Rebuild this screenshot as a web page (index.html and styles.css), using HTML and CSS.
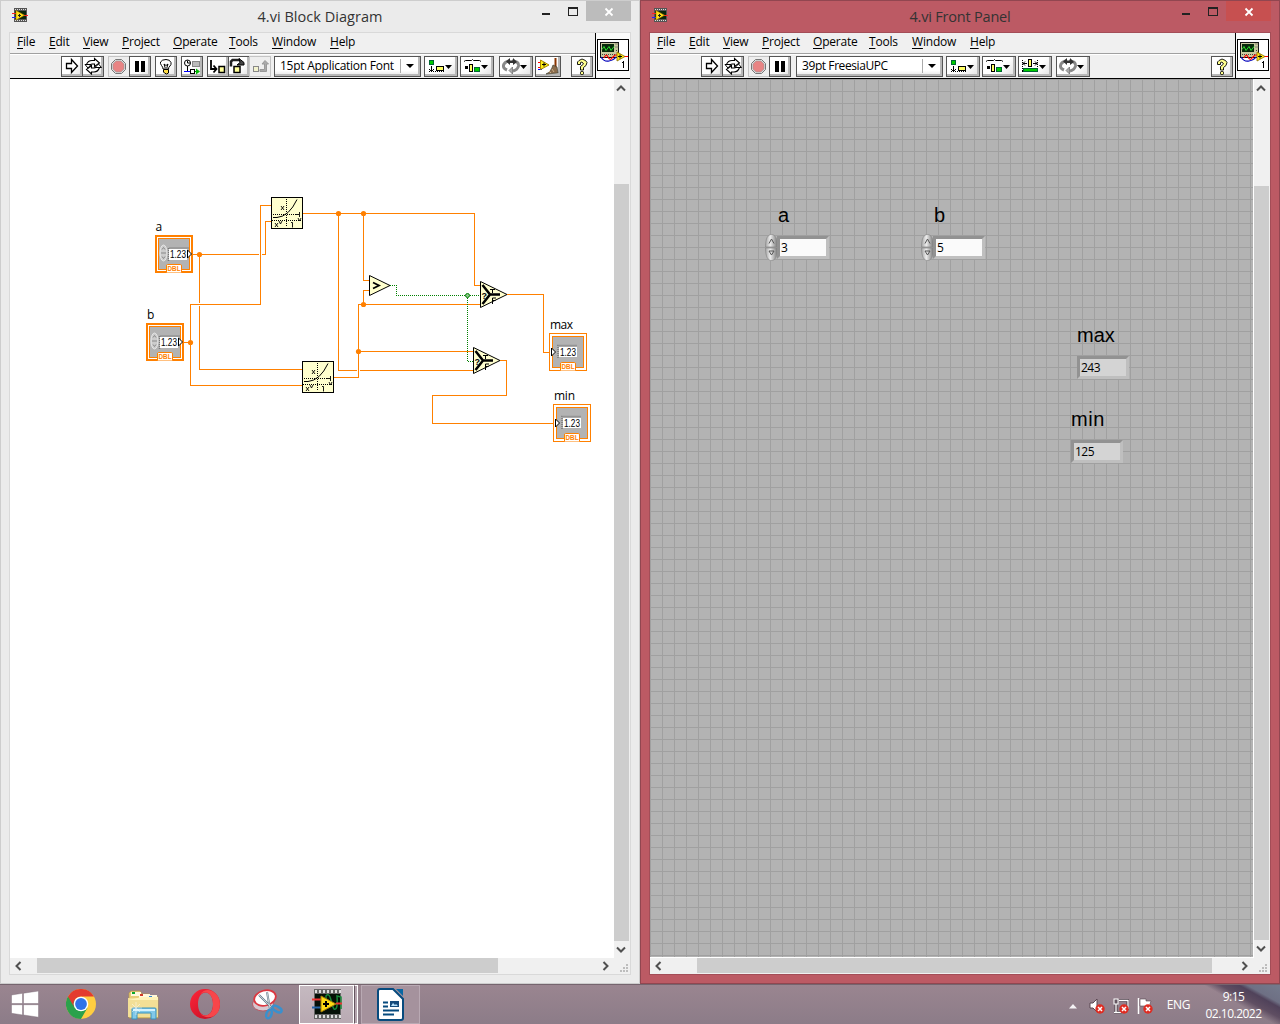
FILE: index.html
```
<!DOCTYPE html>
<html lang="en">
<head>
<meta charset="utf-8">
<title>4.vi</title>
<link rel="stylesheet" href="styles.css">
</head>
<body>
<svg class="library" width="0" height="0" aria-hidden="true">
  <defs>
    <symbol id="app" viewBox="12 7 16 16">
      <rect x="14" y="8" width="13" height="14" fill="#555"/>
      <path d="M15 9.500h12M15 20.500h12" stroke="#ddd" stroke-dasharray="1 1"/>
      <rect x="15" y="11" width="11" height="8" fill="#0a260c"/>
      <path d="M12 13.500h4M24 15.500h4" stroke="#f22" />
      <path d="M12 17.500h4" stroke="#22f"/>
      <path d="M16 10.500v9.500l8.500-4.750z" fill="#ffe11a" stroke="#a77c00" stroke-width=".6"/>
      <path d="M18 15.500h3M19.500 14v3" stroke="#222"/>
    </symbol>
    <symbol id="run" viewBox="0 0 22 21"><path d="M5.500 7.500h5v-4l6 6.500-6 6.500v-4h-5z" fill="#fff" stroke="#000" stroke-width="1.300"/></symbol>
    <symbol id="again" viewBox="0 0 22 21">
      <path d="M4.500 8.500q1.500-4 5.500-4h2.500v-2l5 4.500-5 3.500v-2.500H10q-1.500 0-2 1.500" fill="#fff" stroke="#000" stroke-width="1.100"/>
      <path d="M17.500 11.500q-1.500 4.500-5.500 4.500H9.500v2l-5-4.500 5-4v2.500H12q1.500 0 2-1.500" fill="#fff" stroke="#000" stroke-width="1.100"/>
      <path d="M3 8.500h6l-3 3.500zM13 11.500l3.500-3.500 3 3.500z" fill="#fff" stroke="#000"/>
    </symbol>
    <symbol id="stop" viewBox="0 0 22 21"><path d="M7.500 3.500h6l4 4v6l-4 4h-6l-4-4v-6z" fill="#ddd" stroke="#777"/><path d="M8 5h5l3 3v5l-3 3H8l-3-3V8z" fill="#e88484" stroke="#999" stroke-width=".6"/></symbol>
    <symbol id="pause" viewBox="0 0 22 21"><path d="M6 5h4v11H6zM12 5h4v11h-4z"/></symbol>
    <symbol id="bulb" viewBox="0 0 22 21"><path d="M8 13q0-2-1.500-3.500-1.500-2-1-3.500Q7 3.500 11 3.500t5 3q.5 2-1 3.500Q13.500 11 13.500 13z" fill="#fff" stroke="#000"/><path d="M9 8l1.200 4M13 8l-1.200 4M9 8l2 1.500L13 8" stroke="#000" fill="none"/><path d="M8.500 13.500h5v3.500l-2 1-2-1-1-1z" fill="#ffdc45" stroke="#000"/></symbol>
    <symbol id="retain" viewBox="0 0 22 21"><circle cx="6.500" cy="7" r="3" fill="#fff" stroke="#000"/><path d="M6.500 4.500V7H9M6.500 10v5" stroke="#000" fill="none"/><rect x="11.500" y="5.500" width="7" height="5" fill="#bbb" stroke="#888"/><path d="M3 15.500h7" stroke="#00f"/><path d="M14 15.500h2" stroke="#090"/><rect x="9.500" y="13.500" width="4" height="4" fill="#fff" stroke="#000"/><path d="M15 12.500v6l4-3z" fill="#0b0"/></symbol>
    <symbol id="into" viewBox="0 0 22 21"><path d="M4 4v9h5M6.500 9.500l3 3.500-3 3.500" fill="none" stroke="#000" stroke-width="1.800"/><rect x="12" y="10.500" width="5.500" height="6" fill="#ffff9b" stroke="#000" stroke-width="1.500"/></symbol>
    <symbol id="over" viewBox="0 0 22 21"><path d="M3 10.500V5.500l1.500-1.500H12" fill="none" stroke="#222" stroke-width="2.500"/><path d="M11 2.500l5 4V9H9l3-2.500z" fill="#444" stroke="#000"/><rect x="6" y="10.500" width="6" height="6" fill="#ffff9b" stroke="#000" stroke-width="1.500"/></symbol>
    <symbol id="out" viewBox="0 0 22 21"><path d="M11 13.500h4.500V8h-2.500L16 4.500 19.500 8H17.500v7.500H11z" fill="#aaa" stroke="#999"/><rect x="4.500" y="10.500" width="5" height="5" fill="#f3f3cf" stroke="#888"/></symbol>
    <symbol id="align" viewBox="0 0 34 21"><rect x="5.500" y="4.500" width="4" height="4" fill="#0c0" stroke="#063"/><path d="M7.500 10v5M5 13l2.500 2.500L10 13" stroke="#000" fill="none"/><path d="M5 15.500h16" stroke="#000" stroke-dasharray="1 1"/><rect x="12.500" y="10.500" width="7" height="4" fill="#ffff63" stroke="#000"/><path d="M21 9h7l-3.500 4z"/></symbol>
    <symbol id="spread" viewBox="0 0 34 21"><path d="M4 5.500l1.500-1h6l1-1 1 1h6l1.500 1" stroke="#000" fill="none"/><rect x="5" y="10" width="3" height="3"/><rect x="9.500" y="8.500" width="3" height="7" fill="#ffff63" stroke="#000"/><rect x="14.500" y="11.500" width="5" height="4" fill="#0c0" stroke="#063"/><path d="M21 9h7l-3.500 4z"/></symbol>
    <symbol id="resize" viewBox="0 0 34 21"><path d="M4.500 4v12M19.500 4v12M4 15.500h16" stroke="#000" stroke-dasharray="1 1"/><path d="M5 7.500h4M15 7.500h4M7 5.500l-2 2 2 2M17 5.500l2 2-2 2" stroke="#000" fill="none"/><rect x="10.500" y="3.500" width="3" height="7" fill="#ffff63" stroke="#000"/><rect x="5.500" y="12.500" width="14" height="3" fill="#0c0" stroke="#063"/><path d="M21 9h7l-3.500 4z"/></symbol>
    <symbol id="order" viewBox="0 0 34 21"><path d="M8 14Q3 12 5 8q2-3 6-3M13 5q7 0 6.500 5-1 4-5.500 5" fill="none" stroke="#888" stroke-width="3"/><path d="M10 14.500l3.500-3.500v7z" fill="#aaa" stroke="#666" stroke-width=".7"/><path d="M7 5.500l4-3.500v2.500h3V2l4 4-4 3V7h-3v2z" fill="#333"/><path d="M21 9h7l-3.500 4z"/></symbol>
    <symbol id="clean" viewBox="0 0 26 21"><path d="M3 6.500h4M3 11.500h4" stroke="#f00"/><path d="M3 13.500h4" stroke="#00f"/><path d="M5.500 4v9.500L14 9z" fill="#ffef16" stroke="#a88600"/><path d="M7 8.500h4M9 6.500v4" stroke="#000"/><path d="M20.500 2v9" stroke="#8a3500" stroke-width="2"/><path d="M18 9l4 2 1 6-12 1q5-2 7-9z" fill="#8c6d4d" stroke="#443" stroke-width=".7"/><path d="M14 15l2 2M17 13l2 3" stroke="#ccb28b"/></symbol>
    <symbol id="help" viewBox="0 0 22 21"><path d="M6.500 8.500V6L8 4.500 11 3l3.500 1.500L16 6.500 15 9.500 12.500 11.500V14h-3v-3.500l3-2.500-1.500-2L9.500 6.500v2z" fill="#ffff8c" stroke="#000" stroke-width=".9"/><rect x="9.500" y="15.500" width="3" height="3" rx="1" fill="#ffff8c" stroke="#000"/></symbol>
    <symbol id="vi" viewBox="597 39 32 32">
      <rect x="597.500" y="39.500" width="31" height="31" fill="#fff" stroke="#000"/>
      <rect x="600.500" y="42.500" width="18" height="15" fill="#c9c99f" stroke="#111"/>
      <rect x="602" y="44" width="12" height="8" fill="#082a0b"/>
      <path d="M602 49.500l2-3 2 4 3-4 2 4 3-4" fill="none" stroke="#2cde2c"/>
      <path d="M615.500 44h3M615.500 47h3M616.500 50v2M602 54.500h14" stroke="#444" stroke-dasharray="1 1"/>
      <path d="M601 57q3 5 8 4t7-4" fill="none" stroke="#00b" stroke-width="1.200"/>
      <path d="M604 58q2-5 4-1t4 1l3-3h4M624 56.500h4" fill="none" stroke="#f00" stroke-width="1.200"/>
      <path d="M617 52v9l8-4.500z" fill="#ffec18" stroke="#897000" stroke-width=".8"/>
      <path d="M618 56.500h4M620 54.500v4" stroke="#000"/>
      <path d="M622 62.500h2M623.500 61v7" stroke="#000"/>
    </symbol>
    <symbol id="up" viewBox="0 0 10 8"><path d="M1 6.500l4-4 4 4" fill="none" stroke="#505050" stroke-width="2"/></symbol>
    <symbol id="grip" viewBox="0 0 9 9"><path d="M6 0h2v2H6zM3 3h2v2H3zM6 3h2v2H6zM0 6h2v2H0zM3 6h2v2H3zM6 6h2v2H6z" fill="#bdbdbd"/></symbol>
    <symbol id="err" viewBox="0 0 10 10"><circle cx="5" cy="5" r="4.700" fill="#df2c22"/><path d="M3 3l4 4M7 3L3 7" stroke="#fff" stroke-width="1.500"/></symbol>

    <g id="power">
      <rect x=".5" y=".5" width="31" height="31" fill="#ffffce" stroke="#000"/>
      <path d="M15.500 2v28M2 17.500h24M1 23.500h30" stroke="#000" stroke-dasharray="1 1"/>
      <path d="M2 20.500h4q12-1 20-18" fill="none" stroke="#000"/>
      <path d="M10 9l3 4M13 9l-3 4M4 26l3 4M7 26l-3 4M8 24l1.500 3L11 24M27 21l1.500 3 1.500-3M25 17.500h3M28.500 15v5M20 25.500h1.500v5" fill="none" stroke="#000" stroke-width=".9"/>
    </g>
    <g id="select">
      <path d="M.5.500v26l26.500-13z" fill="#ffffce" stroke="#000"/>
      <path d="M2.500 4l7.500 9.500L2.500 23M9 13.500h11" fill="none" stroke="#000" stroke-width="2.500"/>
      <text x="1.500" y="17.500" class="glyph">?</text>
      <path d="M10 8.500h5M12.500 8v4M12.500 23v-6h3.500M12.500 19.500h3" fill="none" stroke="#000"/>
    </g>
    <g id="tag">
      <path d="M11.500 37.500v-6.500q0-1.500 1-1.500h13q1 0 1 1.500v6.500" fill="#fff" stroke="#ff8000"/>
      <text x="12.500" y="36.200" class="dbl" textLength="13" lengthAdjust="spacingAndGlyphs">DBL</text>
    </g>
    <g id="ctl">
      <rect x="1" y="1" width="36" height="36" fill="#fff" stroke="#ff8000" stroke-width="2"/>
      <rect x="3.500" y="3.500" width="31" height="31" fill="#b3b3b3" stroke="#ff8000"/>
      <path d="M13.500 26V13h20" fill="none" stroke="#777" stroke-dasharray="1 1" stroke-width="1.500"/>
      <rect x="14" y="14" width="18" height="11" fill="#fff"/>
      <text x="15" y="22.500" class="num" textLength="16" lengthAdjust="spacingAndGlyphs">1.23</text>
      <use href="#tag"/>
      <ellipse cx="8.500" cy="18" rx="3.500" ry="8" fill="#ccc" stroke="#e6e6e6"/>
      <path d="M6 18h5M7 14.500l1.500-2 1.500 2M7 21.500l1.500 2 1.500-2" fill="none" stroke="#888"/>
      <path d="M32.500 15v8l4-4z" fill="#fff" stroke="#000"/>
    </g>
    <g id="ind">
      <rect x=".5" y=".5" width="37" height="37" fill="#fff" stroke="#ff8000"/>
      <rect x="3.500" y="3.500" width="31" height="31" fill="#b3b3b3" stroke="#ff8000"/>
      <path d="M9 25V12.500h19" fill="none" stroke="#777" stroke-dasharray="1 1" stroke-width="1.500"/>
      <rect x="10" y="14" width="18" height="10" fill="#fff"/>
      <text x="11" y="22.500" class="num" textLength="16" lengthAdjust="spacingAndGlyphs">1.23</text>
      <use href="#tag"/>
      <path d="M2.500 15v8l4-4z" fill="#fff" stroke="#000"/>
    </g>
    <linearGradient id="metal" x2="1"><stop offset="0" stop-color="#a5a5a5"/><stop offset=".4" stop-color="#ededed"/><stop offset="1" stop-color="#777"/></linearGradient>
    <g id="spinner"><path d="M.5 13C.5 4 3 .5 6.500 .5S12.500 4 12.500 13z" fill="url(#metal)" stroke="#888" stroke-width=".7"/><path d="M.5 14C.5 23 3 26.500 6.500 26.500S12.500 23 12.500 14z" fill="url(#metal)" stroke="#888" stroke-width=".7"/><path d="M4 9.500L6.500 5 9 9.500M4 17h5l-2.500 4z" fill="none" stroke="#555"/></g>
  </defs>
</svg>

<div class="desktop">
<main class="windows">
  <section class="window">
    <header class="titlebar">
      <svg class="appicon"><use href="#app"/></svg>
      <h1 class="title title-diagram">4.vi Block Diagram</h1>
      <div class="controls">
        <i class="minimize"></i><i class="maximize"></i>
        <span class="close"><svg width="10" height="10" viewBox="0 0 10 10"><path d="M1.500 1.500l7 7M8.500 1.500l-7 7" stroke="#fff" stroke-width="1.800"/></svg></span>
      </div>
    </header>
    <div class="frame">
      <div class="bars">
        <div class="bars-main">
          <nav class="menu"><span><u>F</u>ile</span><span><u>E</u>dit</span><span><u>V</u>iew</span><span><u>P</u>roject</span><span><u>O</u>perate</span><span><u>T</u>ools</span><span><u>W</u>indow</span><span><u>H</u>elp</span></nav>
          <div class="toolbar">
            <div class="group"><svg class="btn"><use href="#run"/></svg><svg class="btn"><use href="#again"/></svg></div>
            <div class="group"><svg class="btn off"><use href="#stop"/></svg><svg class="btn"><use href="#pause"/></svg></div>
            <svg class="btn"><use href="#bulb"/></svg>
            <svg class="btn"><use href="#retain"/></svg>
            <div class="group"><svg class="btn"><use href="#into"/></svg><svg class="btn"><use href="#over"/></svg><svg class="btn off"><use href="#out"/></svg></div>
            <div class="combo"><span class="combo-text">15pt Application Font</span><i></i></div>
            <svg class="btn wide"><use href="#align"/></svg>
            <svg class="btn wide"><use href="#spread"/></svg>
            <svg class="btn wide apart"><use href="#order"/></svg>
            <svg class="btn broom"><use href="#clean"/></svg>
            <svg class="btn end"><use href="#help"/></svg>
          </div>
        </div>
        <div class="vi"><svg width="32" height="32"><use href="#vi"/></svg></div>
      </div>
      <div class="view">
        <svg class="diagram" viewBox="10 79 604 879">
          <g fill="none" stroke="#ff8000" shape-rendering="crispEdges">
            <path d="M303 213.500H474.500V285.500H480M338.500 213.500V370.500H357M360 370.500H473M363.500 213.500V280.500H369M369 290.500H363.500V304.500M480 304.500H358.500V377.500H334M358.500 351.500H473"/>
            <path d="M192 254.500H259M262 254.500H265.500V221.500H271M271 205.500H260.500V304.500H190.500V385.500H302M183 342.500H190.500M199.500 254.500V303M199.500 306V369.500H302"/>
            <path d="M507 294.500H543.500V352.500H550M500 360.500H506.500V395.500H432.500V423.500H553"/>
          </g>
          <g fill="#ff8000"><circle cx="338.500" cy="213.500" r="2.600"/><circle cx="363.500" cy="213.500" r="2.600"/><circle cx="199.500" cy="254.500" r="2.600"/><circle cx="190.500" cy="342.500" r="2.600"/><circle cx="363.500" cy="304.500" r="2.600"/><circle cx="358.500" cy="351.500" r="2.600"/></g>
          <path class="bool" d="M390 285.500H396.500V295.500H480M467.500 295.500V361.500H473"/>
          <circle cx="467.500" cy="295.500" r="2" fill="#8fc78f" stroke="#008000"/>
          <use href="#power" x="271" y="197"/>
          <use href="#power" x="302" y="361"/>
          <path d="M369.500 275.500v20l20.500-10z" fill="#ffffce" stroke="#000"/>
          <path d="M373 282.500l6 3-6 3" fill="none" stroke="#000" stroke-width="1.800"/>
          <use href="#select" x="480" y="281"/>
          <use href="#select" x="473" y="347"/>
          <use href="#ctl" x="155" y="235"/>
          <use href="#ctl" x="146" y="323"/>
          <use href="#ind" x="549" y="333"/>
          <use href="#ind" x="553" y="404"/>
          <g class="label"><text x="155.500" y="231">a</text><text x="147" y="319">b</text><text x="550" y="329" textLength="23">max</text><text x="554" y="400" textLength="21">min</text></g>
        </svg>
        <div class="vscroll">
          <svg class="arrow"><use href="#up"/></svg><div class="thumb"></div><svg class="arrow flip"><use href="#up"/></svg>
        </div>
      </div>
      <div class="hscroll"><svg class="arrow left"><use href="#up"/></svg><div class="thumb"></div><svg class="arrow right"><use href="#up"/></svg><svg class="grip"><use href="#grip"/></svg></div>
    </div>
  </section>

  <section class="window active">
    <header class="titlebar">
      <svg class="appicon"><use href="#app"/></svg>
      <h1 class="title">4.vi Front Panel</h1>
      <div class="controls">
        <i class="minimize"></i><i class="maximize"></i>
        <span class="close"><svg width="10" height="10" viewBox="0 0 10 10"><path d="M1.500 1.500l7 7M8.500 1.500l-7 7" stroke="#fff" stroke-width="1.800"/></svg></span>
      </div>
    </header>
    <div class="frame">
      <div class="bars">
        <div class="bars-main">
          <nav class="menu"><span><u>F</u>ile</span><span><u>E</u>dit</span><span><u>V</u>iew</span><span><u>P</u>roject</span><span><u>O</u>perate</span><span><u>T</u>ools</span><span><u>W</u>indow</span><span><u>H</u>elp</span></nav>
          <div class="toolbar">
            <div class="group"><svg class="btn"><use href="#run"/></svg><svg class="btn"><use href="#again"/></svg></div>
            <div class="group"><svg class="btn off"><use href="#stop"/></svg><svg class="btn"><use href="#pause"/></svg></div>
            <div class="combo second"><span class="combo-text">39pt FreesiaUPC</span><i></i></div>
            <svg class="btn wide"><use href="#align"/></svg>
            <svg class="btn wide"><use href="#spread"/></svg>
            <svg class="btn wide"><use href="#resize"/></svg>
            <svg class="btn wide order2"><use href="#order"/></svg>
            <svg class="btn end"><use href="#help"/></svg>
          </div>
        </div>
        <div class="vi"><svg width="32" height="32"><use href="#vi"/></svg></div>
      </div>
      <div class="view">
        <div class="panel">
          <div class="control a"><span class="name">a</span><svg class="spin" viewBox="0 0 13 27"><use href="#spinner"/></svg><span class="field">3</span></div>
          <div class="control b"><span class="name">b</span><svg class="spin" viewBox="0 0 13 27"><use href="#spinner"/></svg><span class="field">5</span></div>
          <div class="control max"><span class="name">max</span><span class="field read">243</span></div>
          <div class="control min"><span class="name">min</span><span class="field read">125</span></div>
        </div>
        <div class="vscroll">
          <svg class="arrow"><use href="#up"/></svg><div class="thumb"></div><svg class="arrow flip"><use href="#up"/></svg>
        </div>
      </div>
      <div class="hscroll"><svg class="arrow left"><use href="#up"/></svg><div class="thumb"></div><svg class="arrow right"><use href="#up"/></svg><svg class="grip"><use href="#grip"/></svg></div>
    </div>
  </section>
</main>

<footer class="taskbar">
  <svg class="start" width="28" height="27" viewBox="0 0 28 27"><path d="M.5 4L11.500 2.300V12.500H.5zM12.500 2.200L27.500 0V12.500H12.500zM.5 13.700h11v10.200L.5 22.300zM12.500 13.700h15v12.500l-15-2.200z" fill="#fff" stroke="#75626e" stroke-width=".4"/></svg>
  <svg class="chrome" width="30" height="30" viewBox="0 0 30 30"><circle cx="15" cy="15" r="15" fill="#ffcd40"/><path d="M15 15L2 7.500A15 15 0 0 0 15 30L21.500 18.700z" fill="#2ba14b"/><path d="M2 7.500A15 15 0 0 1 28 7.500H15A7.500 7.500 0 0 0 8.500 18.700z" fill="#e33b2e"/><circle cx="15" cy="15" r="7.300" fill="#fff"/><circle cx="15" cy="15" r="5.900" fill="#2f73e8"/></svg>
  <svg class="folder" width="32" height="30" viewBox="0 0 32 30"><path d="M2 28V3l2-2h9l2 3h7l1 2h7l1 2v20z" fill="#e9cd77" stroke="#b7984c" stroke-width=".7"/><path d="M4 2h10v4H4zM12 4h11v4H12zM20 5h10v4H20z" fill="#fff8db"/><path d="M5 2h3v2H5z" fill="#0ba92b"/><path d="M13 4h3v2h-3z" fill="#d33a27"/><path d="M22 6h3v2h-3z" fill="#2c86d1"/><path d="M1 8h30v19H1z" fill="#f3df96"/><path d="M1 10l14-3h16v3z" fill="#fff3b8"/><path d="M5 29V19q0-1 1-1h22q1 0 1 1v10h-5v-6H10v6z" fill="#82c9e8" stroke="#3992bd"/><path d="M6 20h22" stroke="#d3f3ff" stroke-width="2"/><path d="M9 12v13M3 18h12M5 14l8 8M13 14l-8 8" stroke="#fff" opacity=".7" stroke-width=".7"/></svg>
  <svg class="opera" width="30" height="30" viewBox="0 0 30 30"><defs><linearGradient id="op" y2="1"><stop stop-color="#ff2639"/><stop offset="1" stop-color="#bd0b22"/></linearGradient></defs><path fill-rule="evenodd" d="M15 0a15 15 0 1 0 0 30 15 15 0 0 0 0-30zM15.500 3.500c4.500 0 7.500 5 7.500 11.500s-3 11.500-7.500 11.500S8 21.500 8 15s3-11.500 7.500-11.500z" fill="url(#op)"/><path d="M10 5.500Q15-1 22 2q8 4 8 13t-7 12.500Q15 30 10 24.500q4 3.500 8.500 1Q23 23 23 15t-5-11q-4-2-8 1.500z" fill="#f7464a"/></svg>
  <svg class="snip" width="31" height="31" viewBox="0 0 31 31"><ellipse cx="11" cy="15" rx="10.500" ry="7" fill="#d6c8d0" stroke="#b95965"/><ellipse cx="13" cy="9" rx="11" ry="7.500" transform="rotate(-15 13 9)" fill="#fff" stroke="#dc3841" stroke-width="1.800"/><path d="M7 6l14 14M15 3l3 17" stroke="#667d8d" stroke-width="2"/><path d="M7 6l14 14M15 3l3 17" stroke="#eee" stroke-width=".7"/><ellipse cx="17" cy="25" rx="2.500" ry="4.500" transform="rotate(20 17 25)" fill="none" stroke="#3990ce" stroke-width="2.500"/><ellipse cx="25" cy="20" rx="5" ry="2.500" transform="rotate(30 25 20)" fill="none" stroke="#3990ce" stroke-width="2.500"/></svg>
  <div class="task current"><svg width="32" height="30" viewBox="0 0 32 30"><rect x="3" y="0" width="27" height="30" fill="#666"/><path d="M4 2.500h26M4 27.500h26" stroke="#ddd" stroke-width="3" stroke-dasharray="2 2"/><rect x="4" y="5" width="25" height="20" fill="#051007"/><path d="M15 19V7q3-4 5 4t3 9q4 2 3-13l4 1v12" fill="none" stroke="#178738" stroke-width="1.500"/><path d="M1 10.500h9M25 14.500h6" stroke="#e33" stroke-width="2"/><path d="M1 18.500h9" stroke="#2464a6" stroke-width="2"/><path d="M10 7v16l15-8z" fill="#ffdb13" stroke="#a77f09"/><path d="M12 15h6M15 12v6" stroke="#000" stroke-width="2"/></svg></div><i class="stack"></i>
  <div class="task"><svg width="28" height="33" viewBox="0 0 28 33"><path d="M3 1h13l10 10v19q0 2-2 2H3q-2 0-2-2V3q0-2 2-2z" fill="#fff" stroke="#074b7e" stroke-width="2"/><path d="M19 1h7v7z" fill="#0867a3"/><path d="M6 14.500h5M6 18.500h5M6 22.500h16M6 26.500h11" stroke="#074b7e" stroke-width="2"/><rect x="13" y="13" width="9" height="6" fill="#164b7c"/><path d="M14 18l2-3 2 2 1-1 2 2z" fill="#b8e1fa"/></svg></div>
  <div class="tray">
    <svg class="more" width="8" height="5" viewBox="0 0 8 5"><path d="M0 4.500L4 0l4 4.500z" fill="#f5f3f5"/></svg>
    <svg width="16" height="16" viewBox="0 0 16 16"><path d="M1 5h3l4-4v13l-4-4H1z" fill="#fff" stroke="#5a4953"/><use href="#err" x="6" y="6" width="10" height="10"/></svg>
    <svg width="16" height="16" viewBox="0 0 16 16"><path d="M6 2.500h9v8H7M3 6v9M1 14.500h8" fill="none" stroke="#4a3d47" stroke-width="3"/><path d="M6 2.500h9v8H7M3 6v9M1 14.500h8" fill="none" stroke="#fff" stroke-width="1.300"/><rect x="1" y="1" width="4" height="5" fill="#655661" stroke="#fff"/><use href="#err" x="6" y="6" width="10" height="10"/></svg>
    <svg width="16" height="16" viewBox="0 0 16 16"><path d="M1.500 0v16" stroke="#fff" stroke-width="1.500"/><path d="M3 1h6v2h5l-1 3 1 3H8V8H3z" fill="#fff" stroke="#54434f" stroke-width=".6"/><use href="#err" x="6" y="6" width="10" height="10"/></svg>
    <span class="lang">ENG</span>
    <div class="clock"><span>9:15</span><span>02.10.2022</span></div>
  </div>
</footer>
</div>
</body>
</html>
```
FILE: styles.css
```
* { box-sizing: border-box; }
body { margin: 0; font-family: "Open Sans", "Noto Sans", sans-serif; font-size: 12px; color: #000; overflow: hidden; }
.library { position: absolute; }
.desktop { width: 1280px; height: 1024px; display: flex; flex-direction: column; }
.windows { display: flex; height: 984px; }
svg { display: block; flex: none; }

/* window chrome */
.window { width: 640px; height: 984px; padding: 0 8px; background: #ebebeb; border: 1px solid #cdcdcd; --rim: #d9d9d9; --close: #bcbcbc; }
.active { background: #bc5a64; border-color: #914650; --rim: #a34d57; --close: #c75050; }
.titlebar { height: 31px; display: grid; grid-template-columns: 110px 1fr 110px; }
.appicon { width: 16px; height: 16px; margin: 6px 0 0 3px; }
.title { margin: 0; font-size: 14.5px; font-weight: 400; line-height: 31px; text-align: center; letter-spacing: -.2px; color: #333; }
.title-diagram { letter-spacing: .03px; }
.controls { display: flex; justify-content: flex-end; }
.minimize { width: 8px; height: 2px; margin: 12px 18px 0 0; background: #222; }
.maximize { width: 10px; height: 9px; margin: 6px 8px 0 0; border: 1px solid #222; border-top-width: 2px; }
.close { width: 45px; height: 20px; background: var(--close); display: flex; align-items: center; justify-content: center; padding-top: 1px; }
.frame { height: 943px; border: 1px solid var(--rim); background: #f0f0f0; }

.bars { display: flex; height: 46px; border-bottom: 1px solid #000; }
.bars-main { width: 585px; }
.menu { height: 20px; padding-left: 7px; display: grid; grid-template-columns: 32px 34px 39px 51px 56px 43px 58px 40px; line-height: 18px; letter-spacing: -.2px; }
.menu u { text-underline-offset: 2px; }
.toolbar { height: 25px; border-top: 1px solid #a0a0a0; box-shadow: inset 0 1px #fff; padding: 2px 2px 0 51px; display: flex; gap: 4px; }
.group { display: flex; }
.btn { width: 22px; height: 21px; background: linear-gradient(135deg, #fff 55%, #ddd); box-shadow: inset 0 0 0 1px #555, inset -3px -3px #b8b8b8; }
.group .btn + .btn { margin-left: -1px; }
.off { background: #eee; box-shadow: inset 0 0 0 1px #c4c4c4; }
.wide { width: 34px; }
.toolbar > .wide { margin-left: -1px; }
.toolbar > .wide + .wide { margin-left: -2px; }
.toolbar > .wide.apart { margin-left: 1px; }
.toolbar > .wide.order2 { margin-left: 0; }
.toolbar > .broom { width: 26px; margin-left: -2px; }
.toolbar > .end { margin-left: auto; }
.combo { width: 147px; height: 21px; margin-left: -1px; border: 1px solid #555; background: linear-gradient(#fff 70%, #e5e5e5); box-shadow: inset -2px -2px #b8b8b8; display: flex; justify-content: space-between; padding: 0 7px 0 5px; line-height: 18px; }
.combo.second { margin-left: 1px; }
.combo-text { letter-spacing: -.26px; white-space: nowrap; }
.second .combo-text { letter-spacing: -.42px; }
.combo i { width: 13px; height: 14px; margin-top: 2px; border-left: 1px solid #aaa; display: flex; align-items: center; justify-content: flex-end; }
.combo i::after { content: ""; border: 4px solid transparent; border-top-color: #000; border-bottom: 0; margin-right: -1px; }
.vi { width: 35px; border-left: 1px solid #000; padding: 6px 0 0 1px; background: #fafafa; }

/* canvas and scroll bars */
.view { display: flex; height: 879px; }
.diagram { width: 604px; height: 879px; background: #fff; }
.vscroll { width: 16px; display: flex; flex-direction: column; align-items: center; padding: 5px 1px 4px 0; }
.arrow { width: 10px; height: 8px; }
.vscroll .arrow { margin-right: 1px; }
.vscroll .thumb { align-self: stretch; height: 757px; margin: 92px 0 5px; background: #cdcdcd; }
.flip { transform: rotate(180deg); }
.hscroll { height: 16px; display: flex; align-items: center; }
.left { transform: rotate(-90deg); margin: 0 19px 1px 3px; }
.right { transform: rotate(90deg); margin: 0 0 1px 103px; }
.hscroll .thumb { width: 461px; height: 15px; margin: 0 0 1px -5px; background: #cdcdcd; }
.grip { width: 9px; height: 9px; margin: 5px 0 0 9px; }
.active .vscroll { border-left: 1px solid #fff; width: 17px; }
.active .vscroll .thumb { margin-top: 94px; height: 754px; }
.active .left { margin-right: 39px; }
.active .hscroll .thumb { width: 515px; }
.active .right { margin-left: 28px; }

/* block diagram */
.bool { fill: none; stroke: #008000; stroke-dasharray: 1 1; shape-rendering: crispEdges; }
.label { font: 12px "Open Sans", sans-serif; }
.num { font: 10px "Liberation Sans", sans-serif; }
.dbl { font: bold 8px "Liberation Sans", sans-serif; fill: #ff8000; }
.glyph { font: bold 9px "Liberation Sans", sans-serif; }

/* front panel */
.panel { position: relative; width: 603px; height: 879px; border-bottom: 1px solid #fff; background: repeating-linear-gradient(90deg, #a0a0a0 0 1px, transparent 1px 12px), repeating-linear-gradient(#a0a0a0 0 1px, #b3b3b3 1px 12px); }
.control { position: absolute; display: grid; grid-template-columns: auto 53px; }
.name { grid-column: 1 / -1; font: 20px/20px "Liberation Sans", Arial, sans-serif; height: 29px; }
.field { width: 52px; height: 23px; margin-top: 2px; border-style: solid; border-width: 3px; border-color: #929292 #bfbfbf #bfbfbf #929292; background: #fafafa; line-height: 18px; padding-left: 1px; letter-spacing: -.5px; }
.read { background: #d4d4d4; }
.spin { width: 13px; height: 27px; }
.spin + .field { margin-left: -1px; }
.a { left: 115px; top: 126px; }
.b { left: 271px; top: 126px; }
.a .name, .b .name { padding-left: 13px; }
.max { left: 427px; top: 246px; }
.min { left: 421px; top: 330px; }
.min .name { letter-spacing: .6px; }

/* taskbar */
.taskbar { height: 40px; display: flex; align-items: flex-start; border-top: 1px solid #75646e; background: linear-gradient(209deg, #747a8d 0, #6e7084 16px, #50425a 20px, #5f4e62 29px, transparent 37px), linear-gradient(#9a8590, #8c7c88); color: #fff; }
.start { margin: 6px 0 0 11px; }
.chrome { margin: 4px 0 0 27px; }
.folder { margin: 5px 0 0 31px; }
.opera { margin: 4px 0 0 31px; }
.snip { margin: 4px 0 0 32px; }
.task { width: 59px; height: 39px; border: 1px solid #b9a9b3; background: #a5929d; display: flex; justify-content: center; padding-top: 2px; margin-left: 3px; }
.current { width: 55px; margin-left: 16px; border-color: #fff; background: linear-gradient(#c5b9c0, #b9aab3); padding-top: 3px; }
.stack { width: 4px; height: 39px; border: 1px solid #fff; border-left-color: #65555f; background: #b4a4ae; }
.tray { margin-left: auto; display: flex; align-items: center; height: 39px; padding-right: 19px; }
.tray > svg { margin: 3px 8px 0 0; }
.tray > .more { margin-right: 12px; }
.lang { margin: 0 16px 0 6px; letter-spacing: -.4px; }
.clock { width: 55px; display: flex; flex-direction: column; align-items: center; line-height: 17px; letter-spacing: -.52px; white-space: nowrap; }
```
